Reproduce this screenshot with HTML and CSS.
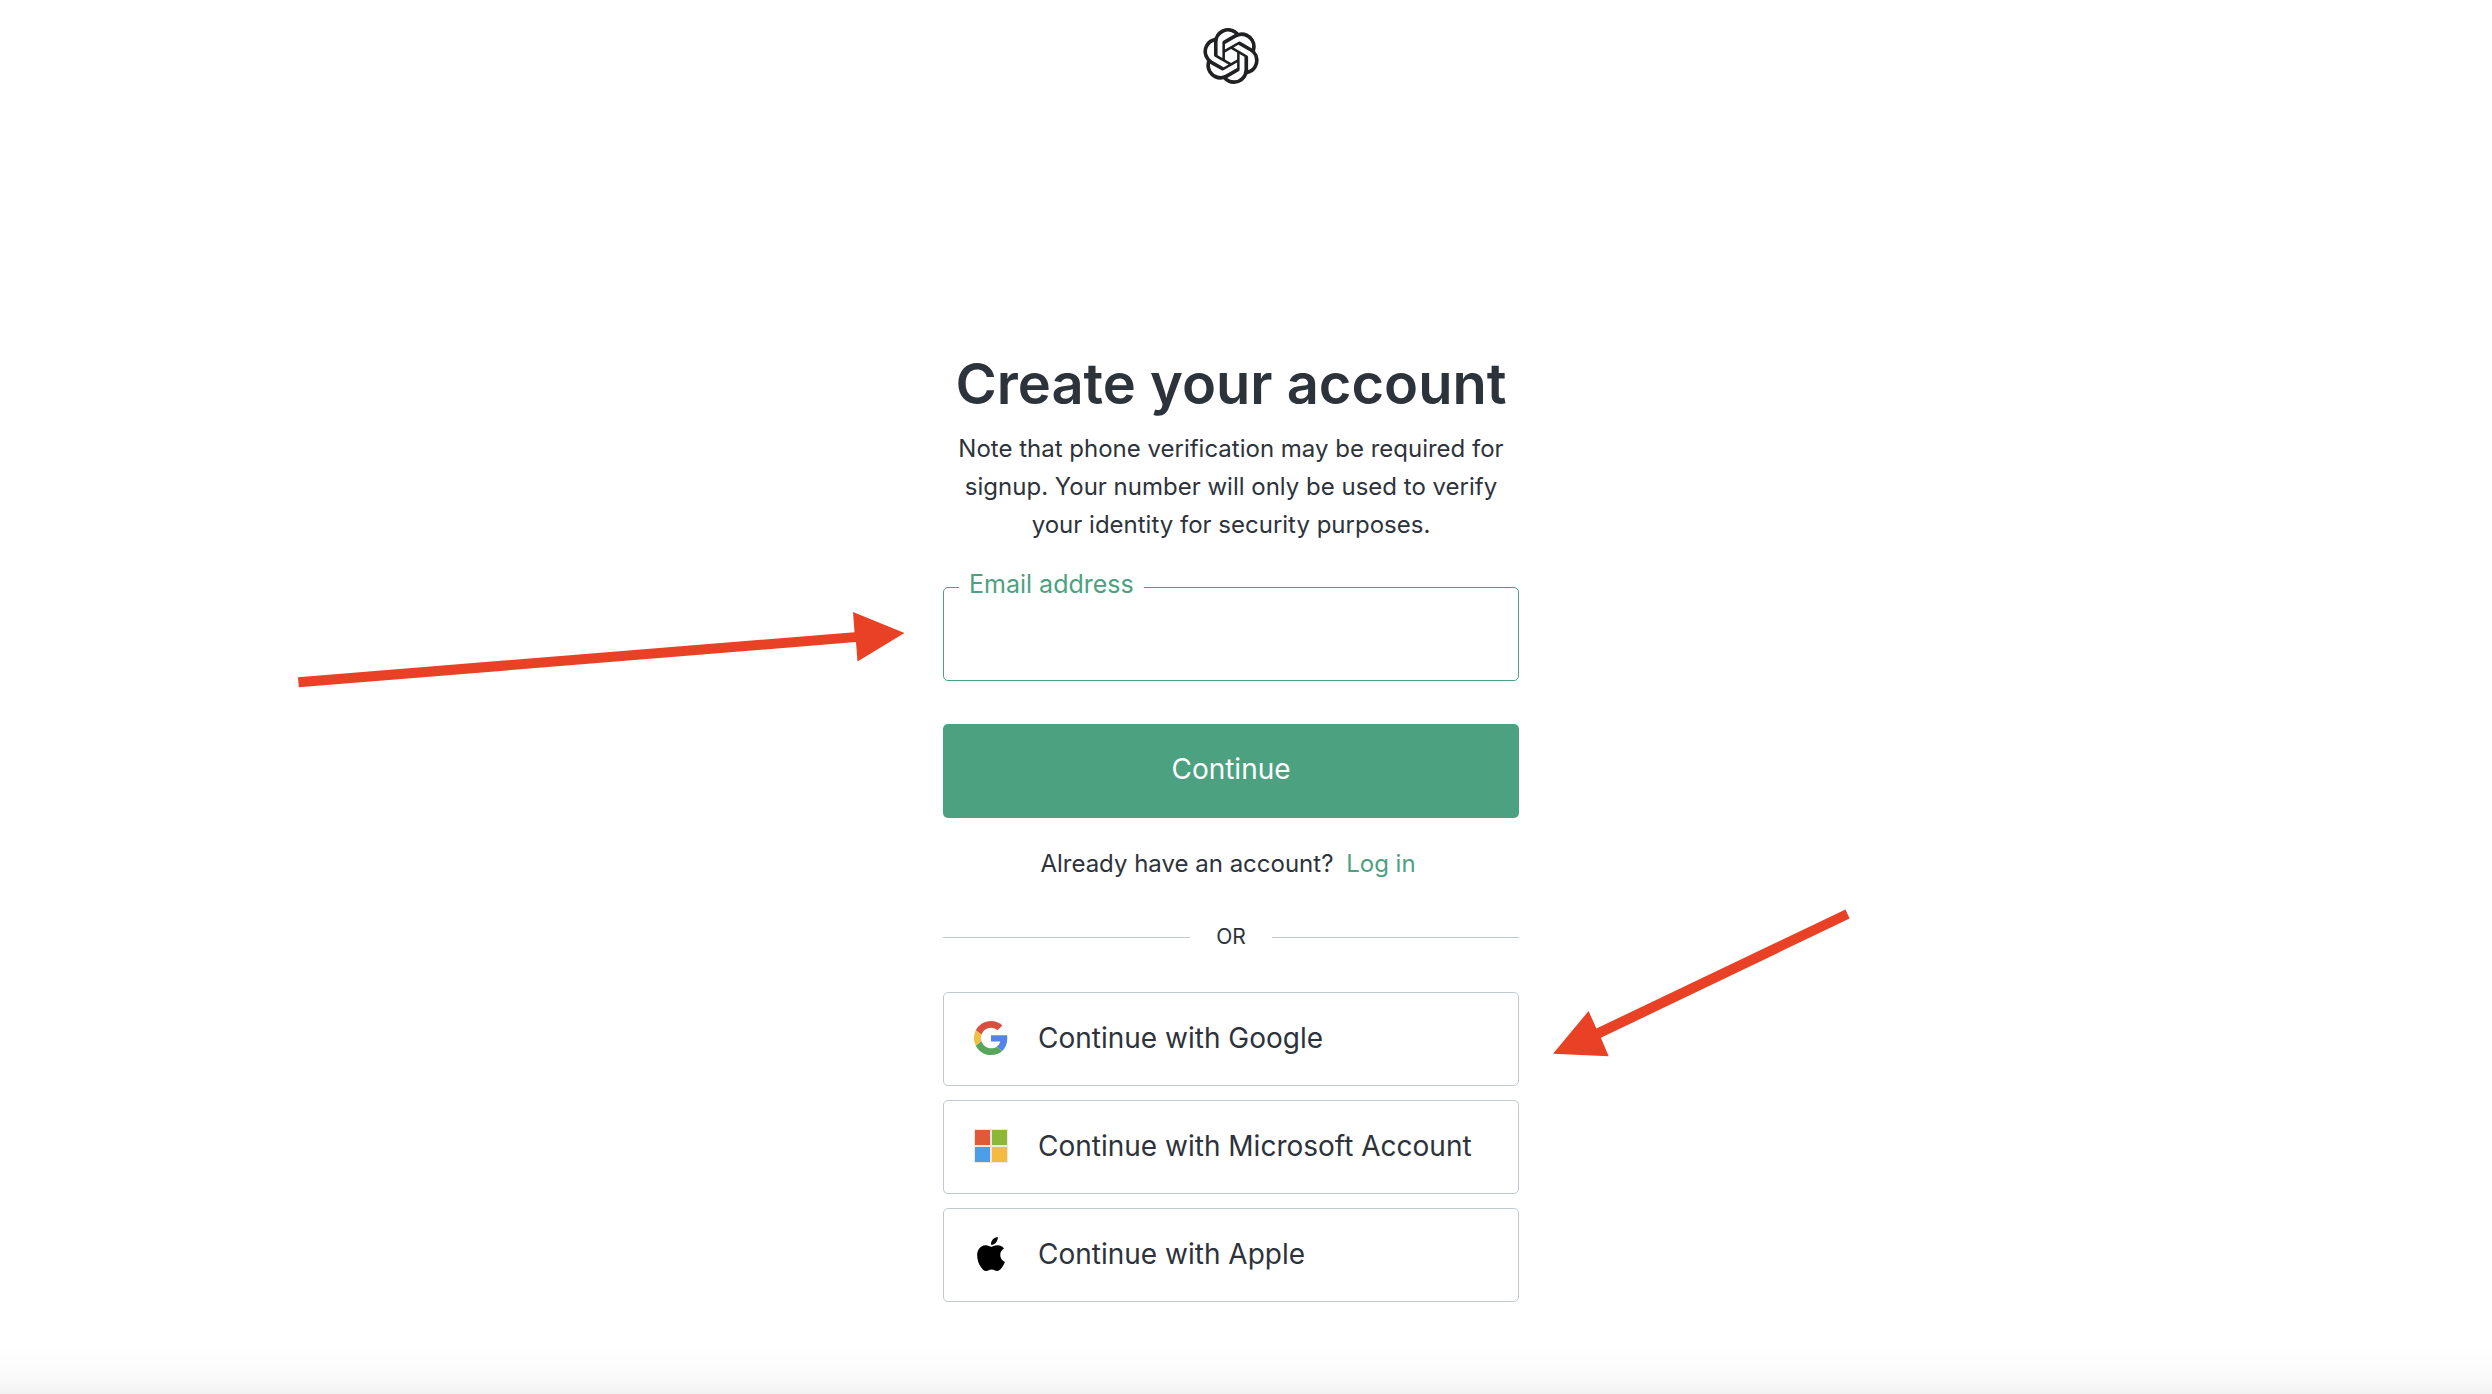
FILE: index.html
```
<!DOCTYPE html>
<html lang="en">
<head>
    <meta charset="utf-8">
    <meta name="viewport" content="width=device-width, initial-scale=1">
    <title>Create your account</title>
    <link rel="stylesheet" href="styles.css">
</head>
<body>
    <header class="header">
        <svg class="logo" viewBox="0 0 24 24" role="img" aria-label="OpenAI">
            <path fill="#202123" d="M22.2819 9.8211a5.9847 5.9847 0 0 0-.5157-4.9108 6.0462 6.0462 0 0 0-6.5098-2.9A6.0651 6.0651 0 0 0 4.9807 4.1818a5.9847 5.9847 0 0 0-3.9977 2.9 6.0462 6.0462 0 0 0 .7427 7.0966 5.98 5.98 0 0 0 .511 4.9107 6.051 6.051 0 0 0 6.5146 2.9001A5.9847 5.9847 0 0 0 13.2599 24a6.0557 6.0557 0 0 0 5.7718-4.2058 5.9894 5.9894 0 0 0 3.9977-2.9001 6.0557 6.0557 0 0 0-.7475-7.0729zm-9.022 12.6081a4.4755 4.4755 0 0 1-2.8764-1.0408l.1419-.0804 4.7783-2.7582a.7948.7948 0 0 0 .3927-.6813v-6.7369l2.02 1.1686a.071.071 0 0 1 .038.052v5.5826a4.504 4.504 0 0 1-4.4945 4.4944zm-9.6607-4.1254a4.4708 4.4708 0 0 1-.5346-3.0137l.142.0852 4.783 2.7582a.7712.7712 0 0 0 .7806 0l5.8428-3.3685v2.3324a.0804.0804 0 0 1-.0332.0615L9.74 19.9502a4.4992 4.4992 0 0 1-6.1408-1.6464zM2.3408 7.8956a4.485 4.485 0 0 1 2.3655-1.9728V11.6a.7664.7664 0 0 0 .3879.6765l5.8144 3.3543-2.0201 1.1685a.0757.0757 0 0 1-.071 0l-4.8303-2.7865A4.504 4.504 0 0 1 2.3408 7.872zm16.5963 3.8558L13.1038 8.364 15.1192 7.2a.0757.0757 0 0 1 .071 0l4.8303 2.7913a4.4944 4.4944 0 0 1-.6765 8.1042v-5.6772a.79.79 0 0 0-.407-.667zm2.0107-3.0231l-.142-.0852-4.7735-2.7818a.7759.7759 0 0 0-.7854 0L9.409 9.2297V6.8974a.0662.0662 0 0 1 .0284-.0615l4.8303-2.7866a4.4992 4.4992 0 0 1 6.6802 4.66zM8.3065 12.863l-2.02-1.1638a.0804.0804 0 0 1-.038-.0567V6.0742a4.4992 4.4992 0 0 1 7.3757-3.4537l-.142.0805L8.704 5.459a.7948.7948 0 0 0-.3927.6813zm1.0976-2.3654l2.602-1.4998 2.6069 1.4998v2.9994l-2.5974 1.4997-2.6067-1.4997Z"/>
        </svg>
    </header>

    <main class="signup">
        <h1>Create your account</h1>
        <p class="note">Note that phone verification may be required for signup. Your number will only be used to verify your identity for security purposes.</p>

        <form>
            <div class="field">
                <input type="email" id="email" name="email" autocomplete="email">
                <label for="email">Email address</label>
            </div>
            <button type="submit" class="submit">Continue</button>
        </form>

        <p class="alternate">Already have an account? <a href="#login">Log in</a></p>

        <div class="divider"><span>OR</span></div>

        <div class="providers">
            <button type="button" class="provider">
                <svg class="icon" viewBox="0 0 48 48" aria-hidden="true">
                    <path fill="#d95040" d="M24 9.5c3.54 0 6.71 1.22 9.21 3.6l6.85-6.85C35.9 2.38 30.47 0 24 0 14.62 0 6.51 5.38 2.56 13.22l7.98 6.19C12.43 13.72 17.74 9.5 24 9.5z"/>
                    <path fill="#5383ec" d="M46.98 24.55c0-1.57-.15-3.09-.38-4.55H24v9.02h12.94c-.58 2.96-2.26 5.48-4.78 7.18l7.73 6c4.51-4.18 7.09-10.36 7.09-17.65z"/>
                    <path fill="#f2be42" d="M10.53 28.59c-.48-1.45-.76-2.99-.76-4.59s.27-3.14.76-4.59l-7.98-6.19C.92 16.46 0 20.12 0 24c0 3.88.92 7.54 2.56 10.78l7.97-6.19z"/>
                    <path fill="#58a55c" d="M24 48c6.48 0 11.93-2.13 15.89-5.81l-7.73-6c-2.15 1.45-4.92 2.3-8.16 2.3-6.26 0-11.57-4.22-13.47-9.91l-7.98 6.19C6.51 42.62 14.62 48 24 48z"/>
                </svg>
                Continue with Google
            </button>
            <button type="button" class="provider">
                <svg class="icon" viewBox="0 0 34 34" aria-hidden="true">
                    <path fill="#f3e8df" d="M0 0h34v34H0z"/>
                    <path fill="#de5b34" d="M1 1h15v15H1z"/>
                    <path fill="#8cb738" d="M18 1h15v15H18z"/>
                    <path fill="#4b9fe8" d="M1 18h15v15H1z"/>
                    <path fill="#f4bb41" d="M18 18h15v15H18z"/>
                </svg>
                Continue with Microsoft Account
            </button>
            <button type="button" class="provider">
                <svg class="icon" viewBox="0 0 24 24" aria-hidden="true">
                    <path d="M12.152 6.896c-.948 0-2.415-1.078-3.96-1.04-2.04.027-3.91 1.183-4.961 3.014-2.117 3.675-.546 9.103 1.519 12.09 1.013 1.454 2.208 3.09 3.792 3.039 1.52-.065 2.09-.987 3.935-.987 1.831 0 2.35.987 3.96.948 1.637-.026 2.676-1.48 3.676-2.948 1.156-1.688 1.636-3.325 1.662-3.415-.039-.013-3.182-1.221-3.22-4.857-.026-3.04 2.48-4.494 2.597-4.559-1.429-2.09-3.623-2.324-4.39-2.376-2-.156-3.675 1.09-4.61 1.09zM15.53 3.83c.843-1.012 1.4-2.427 1.245-3.83-1.207.052-2.662.805-3.532 1.818-.78.896-1.454 2.338-1.273 3.714 1.338.104 2.715-.688 3.559-1.701"/>
                </svg>
                Continue with Apple
            </button>
        </div>

        <!-- pointers to the two ways of signing up -->
        <svg class="arrow arrow-email" viewBox="0 0 608 84" aria-hidden="true">
            <path d="M0 73.3L556.5 28.2L555 8L606.5 29L559.5 57.5L558 38L.8 83.3z"/>
        </svg>
        <svg class="arrow arrow-google" viewBox="0 0 300 150" aria-hidden="true">
            <path d="M1 143.7L36.6 101L44.4 118.5L293.5 -.6L297.6 8.5L48.9 127.8L56.7 146.3z"/>
        </svg>
    </main>

    <div class="fade"></div>
</body>
</html>
```
FILE: styles.css
```
:root {
    --green: #4ca181;
    --text: #2d333a;
    --border: #c2c8d0;
    --arrow: #e94126;
}

* {
    box-sizing: border-box;
}

body {
    min-height: 100vh;
    margin: 0;
    padding-right: 30px;
    color: var(--text);
    background: white;
    font-family: Inter, "Liberation Sans", sans-serif;
    font-size: 24px;
}

input,
button {
    font-family: inherit;
    font-size: inherit;
    color: inherit;
}

.header {
    display: flex;
    justify-content: center;
    padding-top: 28px;
}

.logo {
    width: 56px;
    height: 56px;
}

.signup {
    position: relative;
    width: 576px;
    max-width: 100%;
    margin: 268px auto 0;
    text-align: center;
}

h1 {
    margin: 0;
    font-size: 56px;
    font-weight: 600;
    line-height: 64px;
    white-space: nowrap;
}

.note {
    margin: 14px 0 43px;
    line-height: 38px;
}

.field {
    position: relative;
    margin-bottom: 43px;
}

.field input {
    display: block;
    width: 100%;
    height: 94px;
    padding: 0 26px;
    border: 1px solid var(--green);
    border-radius: 5px;
    outline: none;
    background: white;
    font-size: 28px;
}

.field label {
    position: absolute;
    top: -18px;
    left: 16px;
    padding: 0 10px;
    background: white;
    color: var(--green);
    font-size: 25px;
    line-height: 30px;
}

.submit {
    display: block;
    width: 100%;
    height: 94px;
    padding: 0 0 4px;
    border: 0;
    border-radius: 5px;
    background: var(--green);
    color: white;
    font-size: 28px;
}

.alternate {
    margin: 28px 0 40px;
    line-height: 36px;
}

.alternate a {
    margin: 0 6px;
    color: var(--green);
    text-decoration: none;
}

.divider {
    display: flex;
    align-items: center;
    gap: 26px;
    margin-bottom: 40px;
    font-size: 21px;
    line-height: 30px;
}

.divider::before,
.divider::after {
    content: "";
    flex: 1;
    height: 1px;
    background: var(--border);
}

.providers {
    display: grid;
    gap: 14px;
}

.provider {
    display: flex;
    align-items: center;
    gap: 30px;
    height: 94px;
    padding: 0 30px 2px;
    border: 1px solid var(--border);
    border-radius: 5px;
    background: white;
    font-size: 28px;
}

.icon {
    flex: none;
    width: 34px;
    height: 34px;
}

.arrow {
    position: absolute;
    overflow: visible;
    fill: var(--arrow);
}

.arrow-email {
    top: 252px;
    right: calc(100% + 37px);
    width: 608px;
    height: 84px;
}

.arrow-google {
    top: 558px;
    left: calc(100% + 33px);
    width: 300px;
    height: 150px;
}

.fade {
    position: fixed;
    right: 0;
    bottom: 0;
    left: 0;
    height: 50px;
    background: linear-gradient(rgba(0, 0, 0, 0), rgba(0, 0, 0, .015) 60%, rgba(0, 0, 0, .05));
}
```
